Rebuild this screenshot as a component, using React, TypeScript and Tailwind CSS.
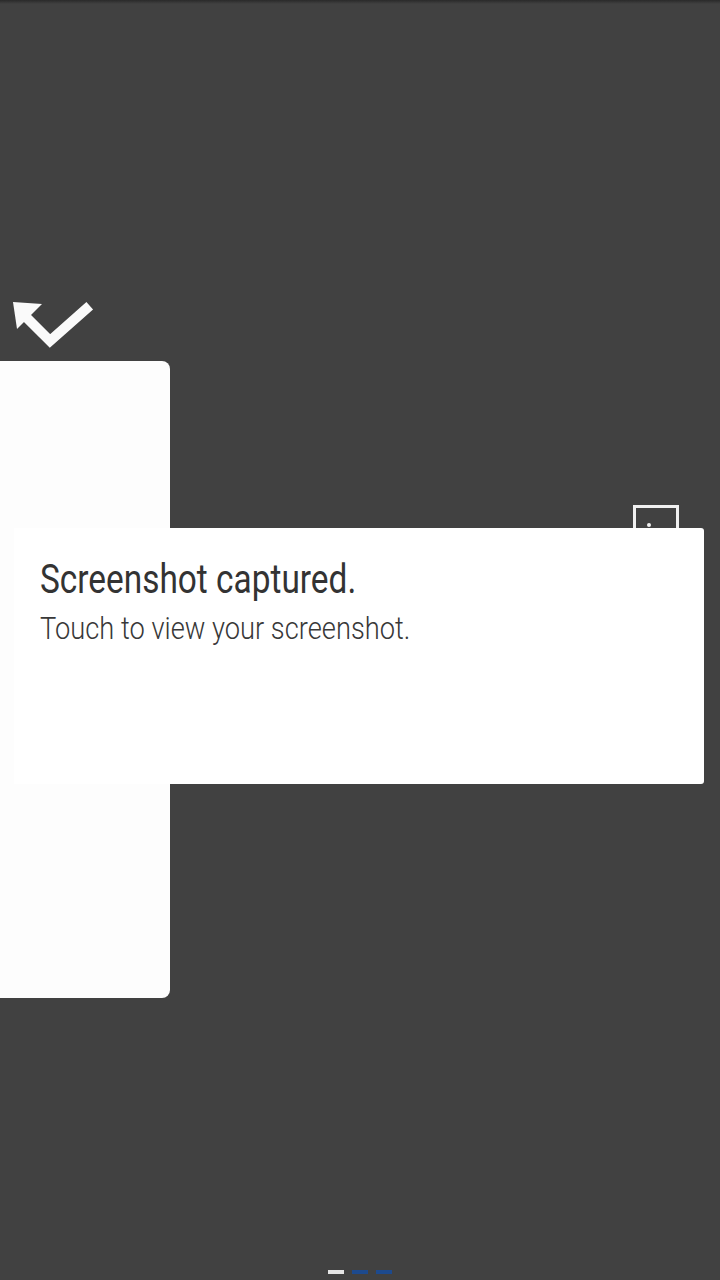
import React from 'react'

function ShotIcon() {
  return (
    <svg width="90" height="56" viewBox="0 0 90 56" className="block">
      <polygon points="3,3 32,5 7,30" fill="#fafafa" />
      <path d="M14 16 L40 42 L76 10" stroke="#fafafa" strokeWidth="10" fill="none" strokeLinecap="square" strokeLinejoin="miter" />
    </svg>
  )
}

export default function App() {
  return (
    <div className="relative w-[720px] h-[1280px] overflow-hidden bg-[#414141] font-['Roboto',sans-serif]">
      <div className="h-[4px] bg-gradient-to-b from-[#2a2a2a] to-[#414141]" />

      <div className="ml-[10px] mt-[295px]">
        <ShotIcon />
      </div>

      <div className="mt-[6px] w-[170px] h-[637px] rounded-r-[8px] bg-[#fdfdfd]" />

      {/* thumbnail frame peeking behind the notification */}
      <div className="absolute left-[633px] top-[505px] w-[46px] h-[40px] border-[3px] border-[#f0f0f0]">
        <div className="absolute left-[11px] top-[15px] w-[4px] h-[4px] rounded-full bg-[#f0f0f0]" />
      </div>

      <div className="absolute left-[14px] top-[528px] w-[690px] h-[256px] rounded-r-[3px] bg-white pl-[26px] pt-[30px]">
        <div className="origin-left scale-x-[0.835] whitespace-nowrap text-[40px] leading-[44px] text-[#333333]">Screenshot captured.</div>
        <div className="mt-[8px] origin-left scale-x-[0.88] whitespace-nowrap text-[31px] leading-[38px] font-light text-[#383838]">Touch to view your screenshot.</div>
      </div>

      <div className="absolute bottom-[6px] left-0 right-0 flex justify-center gap-[8px]">
        <div className="w-[16px] h-[4px] bg-[#e4e4e4]" />
        <div className="w-[16px] h-[4px] bg-[#1d4a8e]" />
        <div className="w-[16px] h-[4px] bg-[#1d4a8e]" />
      </div>
    </div>
  )
}
